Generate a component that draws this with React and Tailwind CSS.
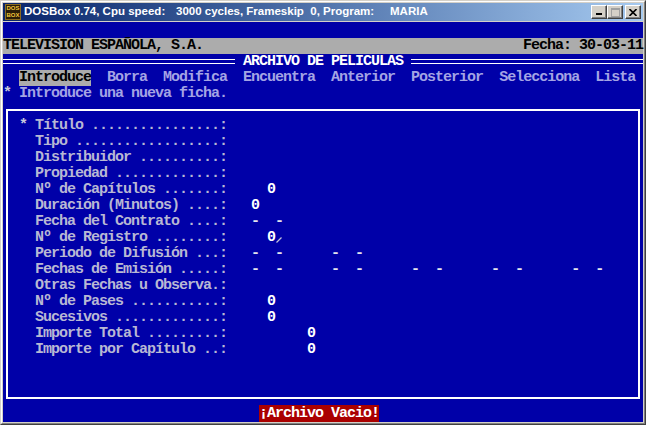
import React from "react";

const LABEL = "text-[#b8b8d4]";
const MENU = "text-[#a4a4e4]";

const fields = [
  { mark: "*", label: "Título ................:", value: null },
  { label: "Tipo ..................:" },
  { label: "Distribuidor ..........:" },
  { label: "Propiedad .............:" },
  { label: "Nº de Capítulos .......:", value: "     0" },
  { label: "Duración (Minutos) ....:", value: "   0" },
  { label: "Fecha del Contrato ....:", dashes: "   -  -" },
  { label: "Nº de Registro ........:", value: "     0", slash: true },
  { label: "Periodo de Difusión ...:", dashes: "   -  -      -  -" },
  {
    label: "Fechas de Emisión .....:",
    dashes: "   -  -      -  -      -  -      -  -      -  -",
  },
  { label: "Otras Fechas u Observa.:" },
  { label: "Nº de Pases ...........:", value: "     0" },
  { label: "Sucesivos .............:", value: "     0" },
  { label: "Importe Total .........:", value: "          0" },
  { label: "Importe por Capítulo ..:", value: "          0" },
];

const menu = ["Borra", "Modifica", "Encuentra", "Anterior", "Posterior", "Selecciona", "Lista"];

function DoubleLine({ className = "" }) {
  return (
    <div className={`h-4 ${className}`}>
      <div className="mt-[5px] h-[5px] border-y-[1.5px] border-white" />
    </div>
  );
}

function TitleButton({ children }) {
  return (
    <div className="flex h-[14px] w-[16px] items-center justify-center border border-t-white border-l-white border-r-[#404040] border-b-[#404040] bg-[#d4d0c8] shadow-[inset_-1px_-1px_0_#808080]">
      {children}
    </div>
  );
}

function DosIcon() {
  return (
    <div className="flex h-[16px] w-[16px] shrink-0 flex-col items-center justify-center border border-[#8a6a20] bg-[#2a1c08] font-['Liberation_Sans',sans-serif] text-[6px] font-bold leading-[7px] text-[#f4c83a]">
      <span>DOS</span>
      <span>BOX</span>
    </div>
  );
}

export default function App() {
  return (
    <div className="h-[425px] w-[646px] overflow-hidden bg-white">
      <div className="flex h-[425px] w-[646px] flex-col border border-t-[#d4d0c8] border-l-[#d4d0c8] border-r-[#404040] border-b-[#404040] bg-[#d4d0c8]">
        <div className="flex flex-1 flex-col border border-t-white border-l-white border-r-[#808080] border-b-[#808080] px-px pt-px">
          {/* window caption */}
          <div className="flex h-[18px] items-center bg-gradient-to-r from-[#0a246a] to-[#a6caf0] pl-[2px] pr-[2px] font-['Liberation_Sans',sans-serif] text-[11.5px] font-bold text-white">
            <DosIcon />
            <span className="ml-[3px] w-[152px] shrink-0 whitespace-pre">DOSBox 0.74, Cpu speed:</span>
            <span className="w-[214px] shrink-0 whitespace-pre">3000 cycles, Frameskip  0, Program:</span>
            <span className="flex-1 whitespace-pre">MARIA</span>
            <div className="flex items-center">
              <TitleButton>
                <svg width="8" height="8" viewBox="0 0 8 8">
                  <rect x="1" y="5" width="6" height="2" fill="#000" />
                </svg>
              </TitleButton>
              <TitleButton>
                <svg width="9" height="9" viewBox="0 0 9 9">
                  <rect x="0.5" y="0.5" width="8" height="8" fill="none" stroke="#a0a0a0" />
                  <rect x="0.5" y="0.5" width="8" height="1.5" fill="#a0a0a0" />
                </svg>
              </TitleButton>
              <div className="w-[2px]" />
              <TitleButton>
                <svg width="8" height="7" viewBox="0 0 8 7">
                  <path d="M0.5 0 L7.5 7 M7.5 0 L0.5 7" stroke="#000" strokeWidth="1.6" />
                </svg>
              </TitleButton>
            </div>
          </div>
          <div className="h-px" />

          {/* DOS text screen, 80x25 cells of 8x16 */}
          <div className="flex h-[400px] w-[640px] flex-col bg-[#0000a8] font-['Liberation_Mono',monospace] text-[15px] font-bold leading-4 tracking-[-1px] whitespace-pre">
            <div className="h-4" />
            <div className="flex h-4 justify-between bg-[#acacac] text-black">
              <span>TELEVISION ESPAÑOLA, S.A.</span>
              <span>Fecha: 30-03-11</span>
            </div>
            <div className="flex h-4 text-white">
              <DoubleLine className="w-[232px]" />
              <span className="w-[176px]"> ARCHIVO DE PELICULAS </span>
              <DoubleLine className="flex-1" />
            </div>
            <div className={`flex h-4 pl-4 ${MENU}`}>
              <span className="bg-[#acacac] text-black">Introduce</span>
              {menu.map((m) => (
                <span key={m}>{"  " + m}</span>
              ))}
            </div>
            <div className={`h-4 ${MENU}`}>
              <span className="text-[#c8c8dc]">*</span> Introduce una nueva ficha.
            </div>

            {/* record form frame */}
            <div className="ml-[3px] mt-[7px] h-[290px] w-[634px] border-2 border-white pl-[11px] pt-[7px]">
              {fields.map((f, i) => (
                <div key={i} className={`flex h-4 ${LABEL}`}>
                  <span className="text-[#c8c8dc]">{f.mark ? "* " : "  "}</span>
                  <span>{f.label}</span>
                  {f.value && <span className="text-white">{f.value}</span>}
                  {f.slash && (
                    <span className="inline-flex h-4 w-2">
                      <svg width="8" height="16" viewBox="0 0 8 16">
                        <path d="M1.5 12.5 L6.5 7.5" stroke="#c0c0d8" strokeWidth="1.3" />
                      </svg>
                    </span>
                  )}
                  {f.dashes && <span className="text-[#e4e4ee]">{f.dashes}</span>}
                </div>
              ))}
            </div>

            <div className="mt-[7px] h-4 pl-[256px]">
              <span className="bg-[#aa0000] text-white">¡Archivo Vacio!</span>
            </div>
          </div>
        </div>
      </div>
    </div>
  );
}
